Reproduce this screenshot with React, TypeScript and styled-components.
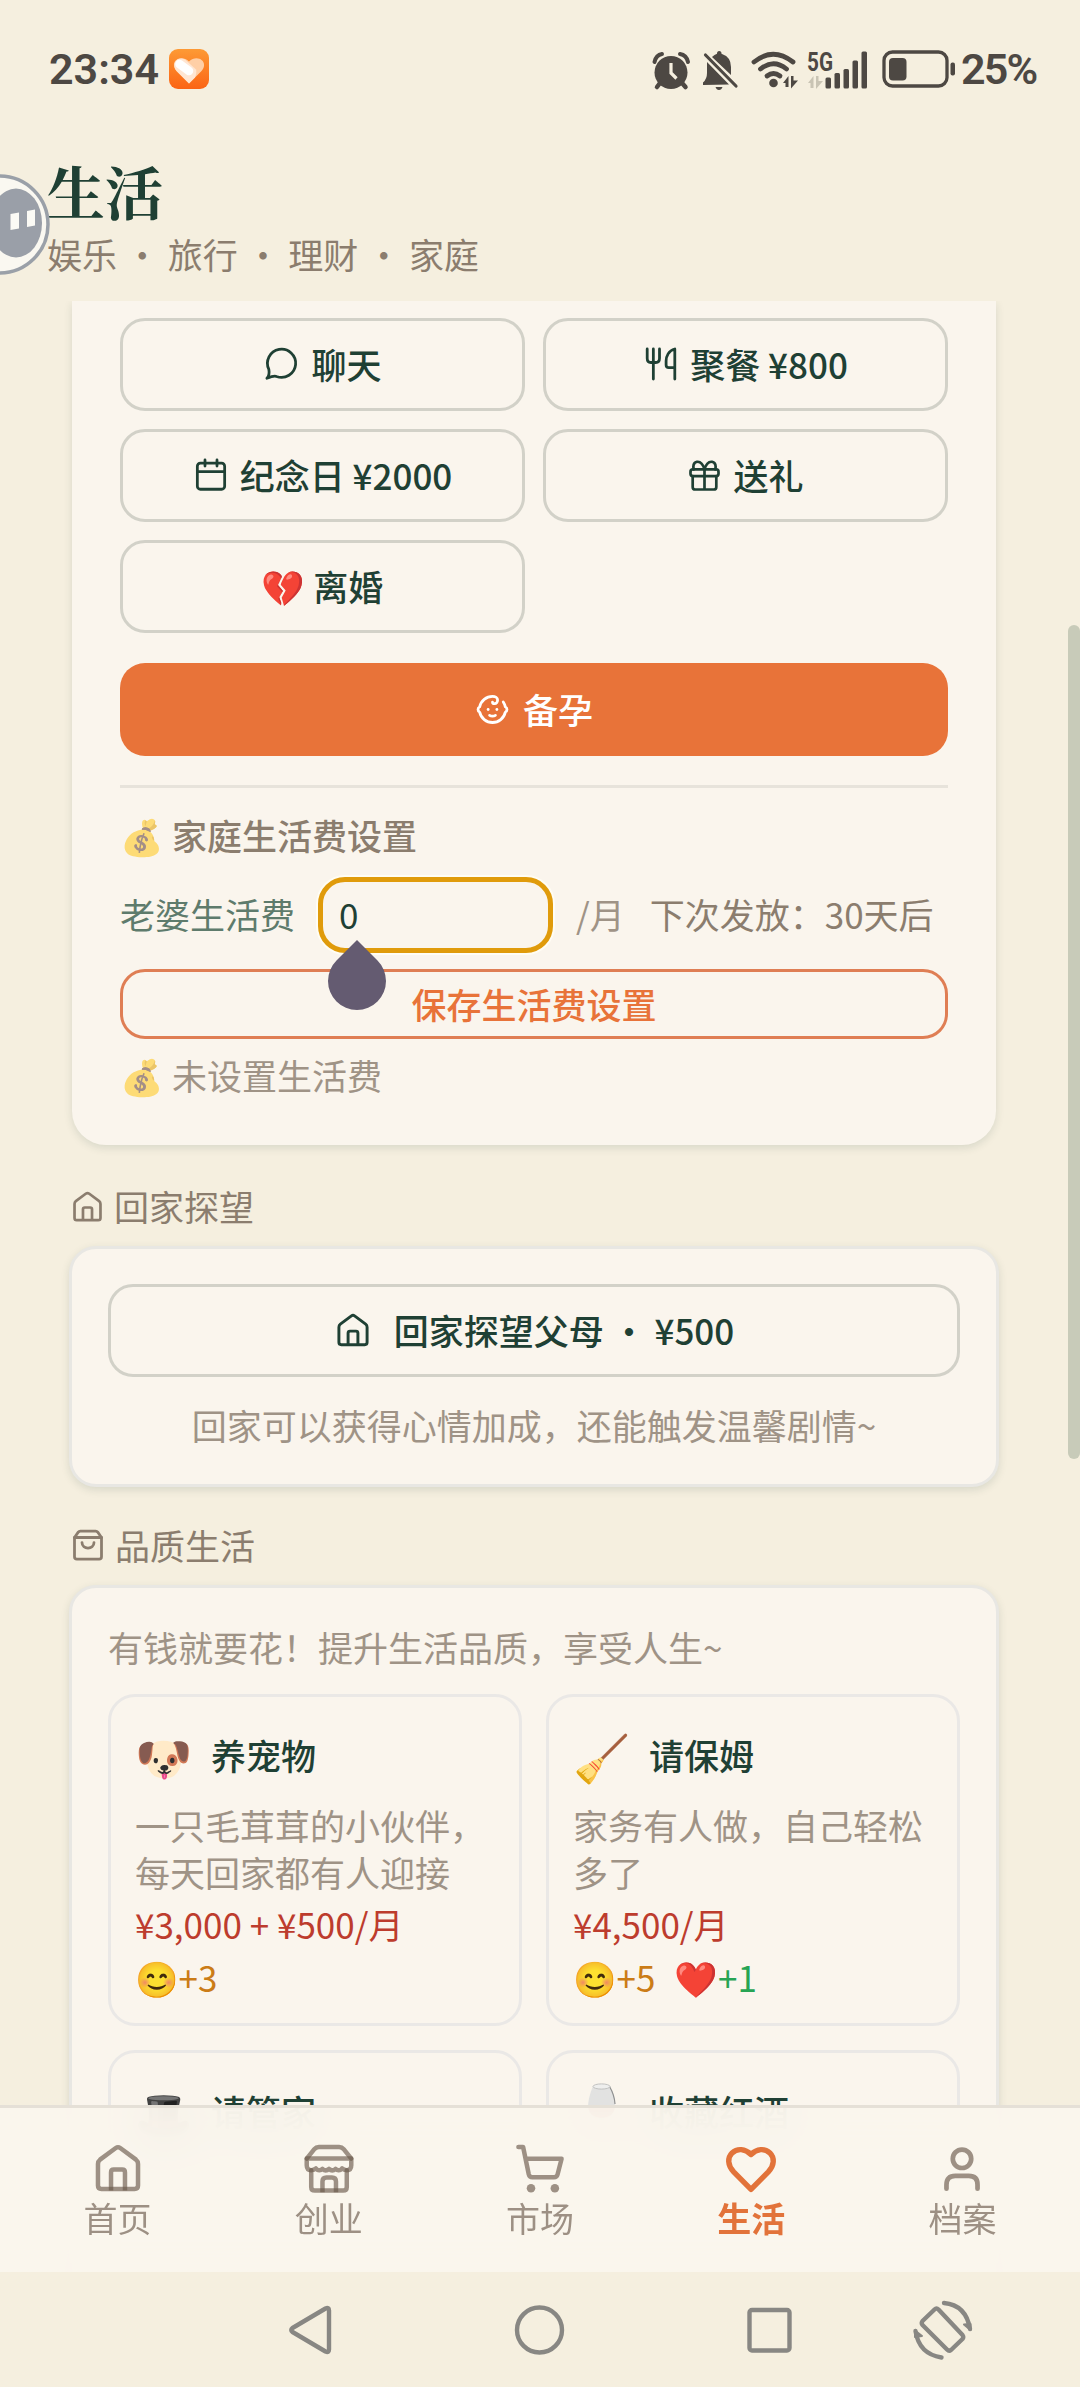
import React from 'react';
import styled, { createGlobalStyle } from 'styled-components';
import { Baby } from 'lucide-react';

const sans = '"Noto Sans CJK SC", "Noto Color Emoji", sans-serif';
const ink = '#1f4034';
const muted = '#9f9386';
const brown = '#8b7d6e';
const orange = '#e87339';
const cream = '#faf5ed';
const sand = '#f5efdf';

const GlobalStyle = createGlobalStyle`
  * { box-sizing: border-box; }
  body { margin: 0; background: ${sand}; font-family: ${sans}; }
`;

const Screen = styled.div`
  position: relative;
  display: flex;
  flex-direction: column;
  width: 1080px;
  height: 2387px;
  overflow: hidden;
  background: ${sand};
  font-size: 35px;
  line-height: 46px;
  color: ${ink};
`;

/* ---------- status bar ---------- */

const StatusBar = styled.div`
  display: flex;
  justify-content: space-between;
  align-items: center;
  height: 138px;
  padding: 0 44px 0 49px;
  font-family: Roboto, sans-serif;
  font-weight: 600;
  font-size: 43px;
  color: #4d4843;
`;

const StatusGroup = styled.div`
  display: flex;
  align-items: center;
`;

const Clock = styled.span`
  width: 120px;
  white-space: nowrap;
`;

const Percent = styled.span`
  margin-left: 6px;
  width: 75px;
  letter-spacing: -1.8px;
  white-space: nowrap;
`;

/* ---------- header ---------- */

const Header = styled.header`
  height: 163px;
  padding: 14px 48px 0 47px;
`;

const Title = styled.h1`
  margin: 0;
  font-family: "Noto Serif CJK SC", "Noto Serif SC", "Noto Sans CJK SC", serif;
  font-weight: 700;
  font-size: 58px;
  line-height: 76px;
`;

const Subtitle = styled.p`
  margin: 3px 0 0;
  line-height: 46px;
  color: ${brown};
`;

const Assistant = styled.div`
  position: absolute;
  left: -51px;
  top: 174px;
  width: 101px;
  height: 101px;
`;

/* ---------- content ---------- */

const Content = styled.main`
  height: 1971px;
  padding: 0 84px 0 72px;
  overflow: hidden;
`;

const Card = styled.section<{ $open?: boolean }>`
  margin: ${p => (p.$open ? '0' : '0 -3px')};
  padding: ${p => (p.$open ? '17px 48px 47px' : '35px 36px 36px')};
  background: ${cream};
  border: ${p => (p.$open ? '0' : '3px solid #e8e7e3')};
  border-radius: ${p => (p.$open ? '0 0 34px 34px' : '27px')};
  box-shadow: 0 3px 9px rgba(31, 64, 52, 0.13);
`;

const SectionHead = styled.h2<{ $top: number }>`
  display: flex;
  align-items: center;
  gap: 9px;
  margin: ${p => p.$top}px 0 17px -2px;
  font-size: 35px;
  font-weight: 400;
  line-height: 46px;
  color: ${brown};
`;

const ActionGrid = styled.div`
  display: grid;
  grid-template-columns: 1fr 1fr;
  gap: 18px;
`;

const Button = styled.button<{ $kind?: 'solid' | 'outline'; $gap?: number }>`
  display: flex;
  align-items: center;
  justify-content: center;
  gap: ${p => p.$gap ?? 11}px;
  width: 100%;
  height: ${p => (p.$kind === 'outline' ? 70 : 93)}px;
  padding: 0 0 1px;
  border-radius: 25px;
  border: ${p => (p.$kind === 'solid' ? '0' : `3px solid ${p.$kind === 'outline' ? '#df7e54' : '#d2d1c8'}`)};
  background: ${p => (p.$kind === 'solid' ? orange : 'transparent')};
  color: ${p => (p.$kind === 'solid' ? '#fff' : p.$kind === 'outline' ? orange : ink)};
  font-family: ${sans};
  font-size: 35px;
  font-weight: 500;
  line-height: 46px;
  white-space: pre;
`;

const PregnancyRow = styled.div`
  margin-top: 30px;
  padding-bottom: 29px;
  border-bottom: 3px solid #e7e3db;
`;

const AllowanceTitle = styled.div`
  margin-top: 24px;
  font-weight: 500;
  color: ${brown};
`;

const FadedEmoji = styled.span`
  display: inline-block;
  width: 52px;
  white-space: nowrap;
  opacity: 0.6;
`;

const AllowanceRow = styled.div`
  display: flex;
  align-items: center;
  height: 76px;
  margin: 19px 0 16px;
  white-space: nowrap;
`;

const AllowanceLabel = styled.label`
  width: 198px;
  padding-bottom: 3px;
  color: #5e7b6c;
`;

const AmountInput = styled.input`
  width: 235px;
  height: 76px;
  padding: 0 16px 3px;
  border: 5px solid #e09b0b;
  border-radius: 27px;
  outline: 0;
  box-shadow: 0 0 0 2px #fffdf4;
  background: ${cream};
  color: ${ink};
  font-family: ${sans};
  font-size: 35px;
`;

const Unit = styled.span`
  margin-left: 23px;
  padding-bottom: 3px;
  color: ${muted};
`;

const NextPay = styled.span`
  margin-left: 25px;
  padding-bottom: 3px;
  color: ${brown};
`;

const CursorHandle = styled.svg`
  position: absolute;
  left: 327px;
  top: 939px;
`;

const Note = styled.p<{ $center?: boolean; $top?: number }>`
  margin: ${p => p.$top ?? 0}px 0 0;
  text-align: ${p => (p.$center ? 'center' : 'left')};
  color: ${muted};
`;

const LuxuryGrid = styled.div`
  display: grid;
  grid-template-columns: 1fr 1fr;
  gap: 24px;
  margin-top: 24px;
`;

const LuxuryCard = styled.article`
  height: 332px;
  padding: 31px 24px 0;
  border: 3px solid #eae8e6;
  border-radius: 27px;
`;

const LuxuryHead = styled.div`
  display: flex;
  align-items: center;
  height: 54px;
  font-weight: 500;
`;

const LuxuryEmoji = styled.span`
  display: flex;
  width: 76px;
  font-size: 46px;
  font-weight: 400;
  line-height: 54px;
  white-space: nowrap;
`;

const LuxuryText = styled.p`
  margin: 19px 0 6px;
  line-height: 47px;
  height: 94px;
  color: ${muted};
`;

const Price = styled.div`
  color: #bd3c2d;
`;

const Effects = styled.div`
  display: flex;
  gap: 19px;
  margin-top: 7px;
`;

const Effect = styled.span<{ $tone: string }>`
  color: ${p => p.$tone};
`;

const ScrollThumb = styled.div`
  position: absolute;
  right: 0;
  top: 625px;
  width: 12px;
  height: 834px;
  border-radius: 6px;
  background: #c8cbb9;
`;

/* ---------- bottom navigation ---------- */

const TabBar = styled.nav`
  position: absolute;
  left: 0;
  right: 0;
  top: 2105px;
  display: grid;
  grid-template-columns: repeat(5, 1fr);
  height: 167px;
  padding: 0 12px;
  border-top: 3px solid #e5e0d7;
  background: rgba(250, 245, 237, 0.95);
  backdrop-filter: blur(24px);
`;

const Tab = styled.a<{ $active?: boolean }>`
  display: flex;
  flex-direction: column;
  align-items: center;
  padding-top: 33px;
  color: ${p => (p.$active ? '#e2733a' : 'rgba(107, 90, 75, 0.65)')};
  font-size: 34px;
  font-weight: ${p => (p.$active ? 700 : 400)};
  line-height: 46px;
`;

const SystemBar = styled.div`
  display: flex;
  align-items: center;
  height: 115px;
  padding-left: 284px;
`;

const SystemSlot = styled.div<{ $width: number }>`
  display: flex;
  width: ${p => p.$width}px;
`;

/* ---------- icons ---------- */

const Glyph = ({ size, weight = 1.85, children }: { size: number; weight?: number; children: React.ReactNode }) => (
  <svg width={size} height={size} viewBox="0 0 24 24" fill="none" stroke="currentColor" strokeWidth={weight} strokeLinecap="round" strokeLinejoin="round">
    {children}
  </svg>
);

const House = ({ size, weight }: { size: number; weight?: number }) => (
  <Glyph size={size} weight={weight}>
    <path d="M3.1 10.2Q3.1 9 4 8.3L11 3.1Q12 2.4 13 3.1L20 8.3Q20.9 9 20.9 10.2V19.8Q20.9 21.3 19.4 21.3H4.6Q3.1 21.3 3.1 19.8Z" />
    <path strokeLinecap="butt" d="M8.9 22V13.9Q8.9 12.7 10.1 12.7H13.9Q15.1 12.7 15.1 13.9V22" />
  </Glyph>
);

const Shop = () => (
  <Glyph size={54} weight={2}>
    <path d="M2.1 7.8L5.3 3.8Q6.3 2.7 7.5 2.7H16.5Q17.7 2.7 18.7 3.8L21.9 7.8" />
    <path d="M2.1 7.8H21.9V10.8Q21.9 13 19.9 13Q18.6 13 17.8 12.2Q16.3 13.8 14.9 12.4Q13.4 13.8 12 12.4Q10.6 13.8 9.1 12.4Q7.7 13.8 6.2 12.2Q5.4 13 4.1 13Q2.1 13 2.1 10.8Z" />
    <path d="M4.1 13V20.4Q4.1 22 5.7 22H18.3Q19.9 22 19.9 20.4V13" />
    <path strokeLinecap="butt" d="M9.1 22.8V18Q9.1 16.2 10.9 16.2H13.3Q15.1 16.2 15.1 18V22.8" />
  </Glyph>
);

const Cart = () => (
  <Glyph size={54} weight={2}>
    <path d="M2.4 2.7H4.5L7 14.8Q7.3 16.1 8.6 16.1H18.2Q19.5 16.1 19.8 14.9L21.6 7.9H5.6" />
    <circle cx="8" cy="21" r="1.9" fill="currentColor" stroke="none" />
    <circle cx="18.6" cy="21" r="1.9" fill="currentColor" stroke="none" />
  </Glyph>
);

const Heart = () => (
  <Glyph size={54} weight={2.4}>
    <path d="M12 21.5L4.3 13.7C1.5 10.7 1.5 7.4 3.6 5.3C5.9 3.1 9.4 3.4 12 6C14.6 3.4 18.1 3.1 20.4 5.3C22.5 7.4 22.5 10.7 19.7 13.7Z" />
  </Glyph>
);

const Person = () => (
  <Glyph size={54} weight={2.1}>
    <circle cx="12" cy="7.9" r="4.1" />
    <path d="M5.1 21.2V19.4Q5.1 15.5 9 15.5H15Q18.9 15.5 18.9 19.4V21.2" />
  </Glyph>
);

const Chat = () => (
  <Glyph size={36}>
    <path d="M2.6 21.5Q4.6 19.4 3.9 15.6A9.4 9.4 0 1 1 9 20.3Q7.4 19.6 2.6 21.5Z" />
  </Glyph>
);

const Cutlery = () => (
  <Glyph size={36}>
    <path d="M2.8 2V8.2Q2.8 11 5.2 11H8.6Q11 11 11 8.2V2M6.9 2V22" />
    <path d="M21.2 22V2C17 3 15.4 7 15.4 10V12.6Q15.4 14.4 17.2 14.4H21.2" />
  </Glyph>
);

const Calendar = () => (
  <Glyph size={36}>
    <rect x="2.9" y="4.1" width="18.2" height="17.4" rx="2" />
    <path d="M2.9 9.8H21.1M8 2V6M16 2V6" />
  </Glyph>
);

const Gift = () => (
  <Glyph size={35}>
    <rect x="2.4" y="7.8" width="19.2" height="4.6" rx="1.6" />
    <path d="M3.9 12.4V19.800Q3.9 21.600 5.7 21.600H18.3Q20.1 21.600 20.1 19.800V12.4M12 7.8V21.600" />
    <path d="M12 7.8C11 4.4 9 2.3 6.8 2.6C4.4 3 3.9 5.8 4.7 7.8M12 7.8C13 4.4 15 2.3 17.2 2.6C19.6 3 20.1 5.8 19.3 7.8" />
  </Glyph>
);

const Bag = () => (
  <Glyph size={36}>
    <path d="M3 7L5.5 3.4Q6 2.7 6.9 2.7H17.1Q18 2.7 18.5 3.4L21 7" />
    <path d="M3 7H21V19.8Q21 21.4 19.4 21.4H4.6Q3 21.4 3 19.8Z" />
    <path d="M8 10.4C8 15.3 16 15.3 16 10.4" />
  </Glyph>
);

const WineGlass = () => (
  <svg width="60" height="62" viewBox="0 0 60 62">
    <path d="M20 6Q28 3 37 6Q43 18 42 28Q40 38 31 39V55H41V58H16V55H26V39Q16 38 15 28Q15 18 20 6Z" fill="#e2e2e1" />
    <path d="M15 25H42Q42 37 28.500 38Q15 37 15 25Z" fill="#b3202c" />
    <path d="M36.500 6.500Q41.500 15 42 24" fill="none" stroke="#8f9090" strokeWidth="1.200" />
    <ellipse cx="28.500" cy="6.500" rx="8.500" ry="2.600" fill="#eeeeed" stroke="#c2c2c1" strokeWidth="1" />
  </svg>
);

const HealthBadge = () => (
  <svg width="40" height="40" viewBox="0 0 40 40">
    <defs>
      <linearGradient id="badge" x1="0" y1="0" x2="0" y2="1">
        <stop offset="0" stopColor="#fd9a35" />
        <stop offset="1" stopColor="#fb6415" />
      </linearGradient>
    </defs>
    <rect width="40" height="40" rx="9" fill="url(#badge)" />
    <path d="M20 34.500L7.500 22C-.5 12.500 12 4.500 20 12.500C28 4.500 40.500 12.500 32.500 22Z" fill="#ffcfa6" />
    <path d="M20 34.500L7.500 22C1.500 14 9 6.500 16 10.500L27 20.500Q28 23 26 28.500Z" fill="#ffe6d3" />
    <path d="M10.500 15L20 22" stroke="#fff" strokeWidth="8.500" strokeLinecap="round" />
  </svg>
);

const StatusIcons = () => (
  <svg width="305" height="44" viewBox="650 46 305 44" fill="#4d4843">
    <circle cx="671" cy="71.5" r="16.500" />
    <path d="M654.500 61Q656 54 662 53M680 53Q686.500 54 688 61" fill="none" stroke="#4d4843" strokeWidth="4" strokeLinecap="round" />
    <path d="M660 82L657 86M682 82L685.500 86" stroke="#4d4843" strokeWidth="4.500" strokeLinecap="round" />
    <path d="M671 62V72L676.500 77.500" fill="none" stroke={sand} strokeWidth="3.200" />
    <path d="M703 84V81.500Q707 78 707 72V61L729 83.500ZM712 56Q714.500 53.500 717 52.800Q717 50 719.200 50Q721.500 50 721.500 52.800Q731 56 731 66V74ZM715.500 86H722.500Q721.500 89 719 89Q716.500 89 715.500 86Z" />
    <path d="M705.500 54L736 85" stroke="#4d4843" strokeWidth="3.200" strokeLinecap="round" />
    <g fill="none" stroke="#4d4843" strokeWidth="4.800" strokeLinecap="round">
      <path d="M754 61Q773 45.500 793 61" />
      <path d="M760.500 68Q773.500 57.500 786.500 68" />
      <path d="M767 75Q773.500 70 780 75" />
    </g>
    <circle cx="773.500" cy="82" r="4.300" />
    <path d="M783 82L788.500 75V86H785.500V82ZM791 75H793.500V79.500H798L791 87.500Z" />
    <g fill="#c9c4b4">
      <path d="M808 82L813.500 75V87H810.500V82ZM816 75H818.500V80H823L816 88Z" />
    </g>
    <text x="807" y="69.500" fontFamily="Roboto, sans-serif" fontWeight="700" fontSize="25" textLength="26" lengthAdjust="spacingAndGlyphs">5G</text>
    <rect x="825.500" y="76.500" width="5.500" height="11" rx="1.500" />
    <rect x="834.500" y="72" width="5.500" height="15.500" rx="1.500" />
    <rect x="843.500" y="68" width="5.500" height="19.500" rx="1.500" />
    <rect x="852.500" y="59.500" width="5.500" height="28" rx="1.500" />
    <rect x="861.500" y="50.500" width="5.500" height="37" rx="1.500" />
    <rect x="884" y="51" width="63" height="34" rx="8.500" fill="none" stroke="#4d4843" strokeWidth="3.300" />
    <rect x="889" y="57" width="17.500" height="22.500" rx="4" />
    <rect x="950.500" y="61.500" width="4.500" height="13" rx="2" />
  </svg>
);

const systemStroke = { fill: 'none', stroke: '#888783', strokeWidth: 4.4, strokeLinejoin: 'round' as const, strokeLinecap: 'round' as const };

const actions: { icon?: React.ReactNode; label: string; gap?: number }[] = [
  { icon: <Chat />, label: '聊天', gap: 12 },
  { icon: <Cutlery />, label: '聚餐 ¥800' },
  { icon: <Calendar />, label: '纪念日 ¥2000' },
  { icon: <Gift />, label: '送礼' },
  { label: '💔 离婚' },
];

type Luxury = { emoji: React.ReactNode; name: string; text?: string; price?: string; mood?: string; health?: string };

const luxuries: Luxury[] = [
  { emoji: '🐶', name: '养宠物', text: '一只毛茸茸的小伙伴，每天回家都有人迎接', price: '¥3,000 + ¥500/月', mood: '+3' },
  { emoji: '🧹', name: '请保姆', text: '家务有人做，自己轻松多了', price: '¥4,500/月', mood: '+5', health: '+1' },
  { emoji: '🎩', name: '请管家' },
  { emoji: <WineGlass />, name: '收藏红酒' },
];

const tabs = [
  { label: '首页', icon: <House size={54} weight={2} /> },
  { label: '创业', icon: <Shop /> },
  { label: '市场', icon: <Cart /> },
  { label: '生活', icon: <Heart />, active: true },
  { label: '档案', icon: <Person /> },
];

export default function App() {
  return (
    <Screen>
      <GlobalStyle />
      <StatusBar>
        <StatusGroup>
          <Clock>23:34</Clock>
          <HealthBadge />
        </StatusGroup>
        <StatusGroup>
          <StatusIcons />
          <Percent>25%</Percent>
        </StatusGroup>
      </StatusBar>

      <Header>
        <Title>生活</Title>
        <Subtitle>娱乐 • 旅行 • 理财 • 家庭</Subtitle>
      </Header>
      <Assistant>
        <svg width="101" height="101" viewBox="-51 174 101 101">
          <circle cx="-.5" cy="224.500" r="48.500" fill="#faf8f1" stroke="#9aa0a8" strokeWidth="3.500" />
          <ellipse cx="16" cy="223" rx="26" ry="34.500" fill="#9a9fa8" />
          <path d="M10.500 214L19 212.500V228.500L10.500 230ZM27 211L35 209.500V225.500L27 227Z" fill="#fbfaf5" />
        </svg>
      </Assistant>

      <Content>
        <Card $open>
          <ActionGrid>
            {actions.map(a => (
              <Button key={a.label} $gap={a.gap}>
                {a.icon}
                {a.label}
              </Button>
            ))}
          </ActionGrid>
          <PregnancyRow>
            <Button $kind="solid" $gap={13}>
              <Baby size={35} strokeWidth={1.9} />
              备孕
            </Button>
          </PregnancyRow>
          <AllowanceTitle><FadedEmoji>💰</FadedEmoji>家庭生活费设置</AllowanceTitle>
          <AllowanceRow>
            <AllowanceLabel>老婆生活费</AllowanceLabel>
            <AmountInput defaultValue="0" />
            <Unit>/月</Unit>
            <NextPay>下次发放：30天后</NextPay>
          </AllowanceRow>
          <Button $kind="outline">保存生活费设置</Button>
          <Note $top={13}><FadedEmoji>💰</FadedEmoji>未设置生活费</Note>
        </Card>

        <SectionHead $top={38}><House size={35} />回家探望</SectionHead>
        <Card>
          <Button $gap={22}><House size={38} />回家探望父母 • ¥500</Button>
          <Note $center $top={25}>回家可以获得心情加成，还能触发温馨剧情~</Note>
        </Card>

        <SectionHead $top={35}><Bag />品质生活</SectionHead>
        <Card>
          <Note $top={1}>有钱就要花！提升生活品质，享受人生~</Note>
          <LuxuryGrid>
            {luxuries.map(l => (
              <LuxuryCard key={l.name}>
                <LuxuryHead><LuxuryEmoji>{l.emoji}</LuxuryEmoji>{l.name}</LuxuryHead>
                {l.text && <LuxuryText>{l.text}</LuxuryText>}
                {l.price && <Price>{l.price}</Price>}
                <Effects>
                  {l.mood && <Effect $tone="#cb7c17">😊{l.mood}</Effect>}
                  {l.health && <Effect $tone="#27a454">❤️{l.health}</Effect>}
                </Effects>
              </LuxuryCard>
            ))}
          </LuxuryGrid>
        </Card>
      </Content>

      <CursorHandle width="60" height="72" viewBox="0 0 60 72">
        <path d="M30 1L50.500 21.500A29 29 0 1 1 9.500 21.500Z" fill="#645b71" />
      </CursorHandle>
      <ScrollThumb />

      <TabBar>
        {tabs.map(t => (
          <Tab key={t.label} $active={t.active}>
            {t.icon}
            {t.label}
          </Tab>
        ))}
      </TabBar>

      <SystemBar>
        <SystemSlot $width={227}>
          <svg width="52" height="56" viewBox="284 2301 52 56" {...systemStroke}>
            <path d="M292.500 2327Q290 2329 292.500 2331L325.500 2350.500Q329 2352 329 2348.500V2309.500Q329 2306 325.500 2307.500Z" />
          </svg>
        </SystemSlot>
        <SystemSlot $width={230}>
          <svg width="58" height="58" viewBox="511 2300 58 58" {...systemStroke}>
            <circle cx="539.500" cy="2329" r="22.500" />
          </svg>
        </SystemSlot>
        <SystemSlot $width={168}>
          <svg width="56" height="56" viewBox="741 2301 56 56" {...systemStroke}>
            <rect x="749.500" y="2309" width="40" height="40.500" rx="2.500" />
          </svg>
        </SystemSlot>
        <SystemSlot $width={70}>
          <svg width="66" height="66" viewBox="909 2296 66 66" {...systemStroke}>
            <path d="M934.500 2308.500Q936.500 2306.500 938.500 2308.500L962.500 2334Q964 2336 962.500 2338L951 2349Q949 2350.500 947 2348.500L922.500 2324Q921 2322 922.500 2320Z" />
            <path d="M944 2302Q966 2304 970 2328M941.500 2356.500Q919 2353 915.500 2330" />
            <path d="M964 2323.500L970.500 2329V2323ZM922 2335L915 2329.500V2336Z" fill="#888783" strokeWidth="2" />
          </svg>
        </SystemSlot>
      </SystemBar>
    </Screen>
  );
}
